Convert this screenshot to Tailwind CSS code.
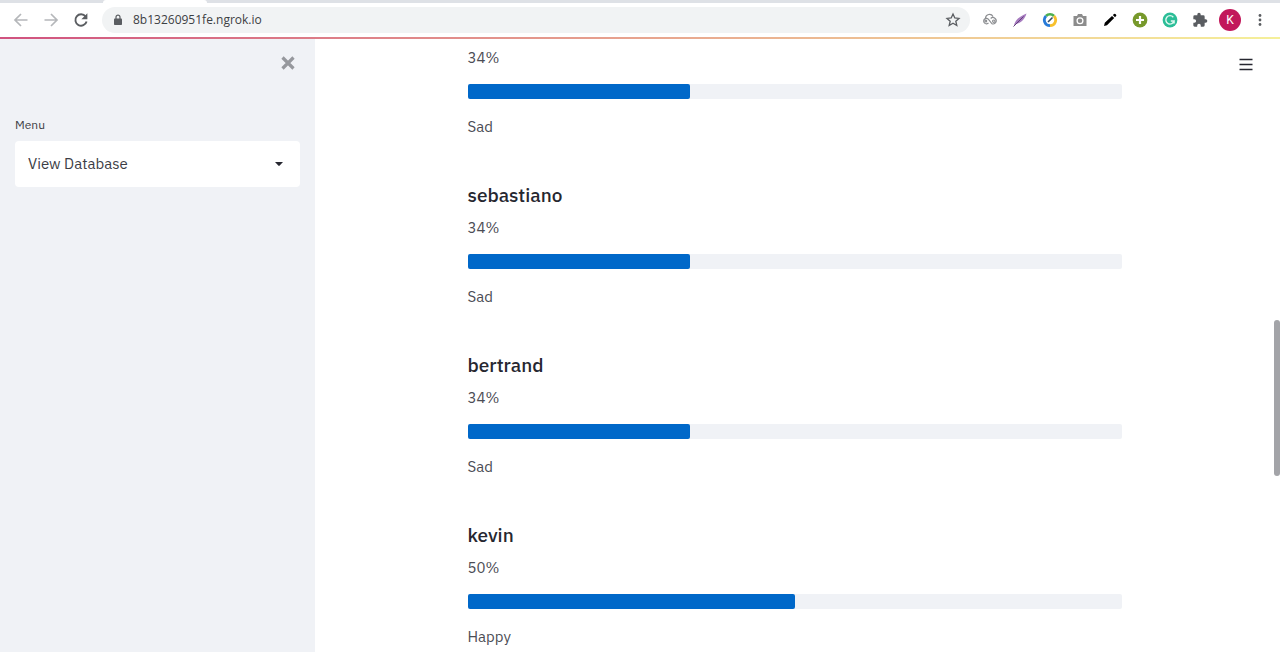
<!DOCTYPE html>
<html lang="en">
<head>
<meta charset="utf-8">
<meta name="viewport" content="width=device-width, initial-scale=1">
<title>View Database</title>
<script src="https://cdn.jsdelivr.net/npm/@tailwindcss/browser@4"></script>
</head>
<body class="flex h-screen flex-col overflow-hidden bg-white font-['IBM_Plex_Sans','Noto_Sans',sans-serif] text-[#262730]">
<header class="shrink-0">
  <div class="h-[3px] bg-[#dee1e6] pl-[103px]"><div class="h-full w-[104px] rounded-t bg-white"></div></div>
  <div class="flex h-[34px] items-center bg-white pr-3 pl-3">
    <nav class="flex gap-3" aria-label="Browser">
      <button class="size-[18px]" aria-label="Back"><svg class="size-[18px]" viewBox="0 0 18 18" fill="none" stroke="#b5b7ba" stroke-width="1.7"><path d="M15.500 9H3M9 3 3 9l6 6"/></svg></button>
      <button class="size-[18px]" aria-label="Forward"><svg class="size-[18px]" viewBox="0 0 18 18" fill="none" stroke="#b5b7ba" stroke-width="1.700"><path d="M2.500 9H15M9 3l6 6-6 6"/></svg></button>
      <button class="size-[18px]" aria-label="Reload"><svg class="size-[18px]" viewBox="0 0 18 18"><path d="M13.600 5.500A5.700 5.700 0 1 0 14.600 10.500" fill="none" stroke="#5a5d61" stroke-width="1.900"/><path d="M15.400 2.200v6H9.400z" fill="#5a5d61"/></svg></button>
    </nav>
    <div class="ml-3 flex h-[26px] flex-1 items-center rounded-full bg-[#f1f3f4] pr-[9px] pl-[11px]">
      <svg class="h-3 w-[10px]" viewBox="0 0 10 12"><rect x="1" y="4.500" width="8" height="6.500" rx=".8" fill="#5a5d61"/><path d="M3 5V3.200a2 2 0 0 1 4 0V5" fill="none" stroke="#5a5d61" stroke-width="1.200"/></svg>
      <input class="ml-[10px] min-w-0 flex-1 bg-transparent font-['Open_Sans',sans-serif] text-[12px] text-[#3c4043] outline-none" aria-label="Address" value="8b13260951fe.ngrok.io">
      <button class="size-4" aria-label="Bookmark"><svg class="size-4" viewBox="0 0 16 16" fill="none" stroke="#5a5d61" stroke-width="1.300"><path d="m8 2 1.800 4 4.200.4-3.200 2.800 1 4.300L8 11.200l-3.800 2.300 1-4.300L2 6.400l4.200-.4z"/></svg></button>
    </div>
    <div class="ml-3 flex items-center gap-[14px]">
      <button class="size-4" aria-label="Cloud extension"><svg class="size-4" viewBox="0 0 16 16" fill="none" stroke="#8c8e91" stroke-width="1.200"><path d="M3.500 6A4 4 0 0 1 11 4.500M6.500 10.800A2.700 2.700 0 1 1 6.300 7.200L10 11.800a3.200 3.200 0 1 0-1.300-5.300"/><circle cx="3.800" cy="9" r=".9"/><circle cx="11.800" cy="9.200" r="1.200"/></svg></button>
      <button class="size-4" aria-label="Feather extension"><svg class="size-4" viewBox="0 0 16 16"><path d="M2 13.500C3 8 8 4 14.500 1.500 13 7 9 11 4 12z" fill="#a67bbf"/><path d="m1.500 14.500 10-10" stroke="#63417a"/></svg></button>
      <button class="size-4" aria-label="Compass extension"><svg class="size-4" viewBox="0 0 16 16" fill="none" stroke-width="2.800"><path d="M4 4A5.700 5.700 0 0 1 12 4" stroke="#4caf50"/><path d="M8 13.700A5.700 5.700 0 0 1 4 4" stroke="#287bd8"/><path d="M12 4a5.700 5.700 0 0 1-4 9.700" stroke="#f7c02c"/><path d="m6 10 4.500-4.500" stroke="#374b62" stroke-width="1.600"/></svg></button>
      <button class="size-4" aria-label="Camera extension"><svg class="size-4" viewBox="0 0 16 16"><path d="M1.500 4H5l1-2h4l1 2h3.500v10h-13z" fill="#8c8c8c"/><circle cx="8" cy="8.700" r="2.900" fill="#8c8c8c" stroke="#fff" stroke-width="1.300"/></svg></button>
      <button class="size-4" aria-label="Pen extension"><svg class="size-4" viewBox="0 0 16 16"><path d="m2 14 .8-3.200L10 3.900l2.200 2.200L5 13.200zM10.800 3.100l1.300-1.200q.7-.5 1.300.1l.7.7q.6.700 0 1.300L13 5.300z" fill="#000"/></svg></button>
      <button class="size-4" aria-label="Add extension"><svg class="size-4" viewBox="0 0 16 16"><circle cx="8" cy="8" r="7.400" fill="#77992b"/><path d="M8 4v8M4 8h8" stroke="#fff" stroke-width="2.200"/></svg></button>
      <button class="size-4" aria-label="Grammar extension"><svg class="size-4" viewBox="0 0 16 16"><circle cx="8" cy="8" r="7.400" fill="#2bbd97"/><path d="M11.300 5.200A4.200 4.200 0 1 0 12.100 9H8.800M12.100 9v2.500" fill="none" stroke="#dff8ef" stroke-width="1.400"/></svg></button>
      <button class="size-4" aria-label="Extensions"><svg class="size-4" viewBox="0 0 24 24"><path fill="#5a5d61" d="M20.500 11H19V7a2 2 0 0 0-2-2h-4V3.500a2.500 2.500 0 0 0-5 0V5H4a2 2 0 0 0-2 2v3.800h1.500a2.700 2.700 0 0 1 0 5.400H2V20c0 1.100.9 2 2 2h3.800v-1.500a2.700 2.700 0 0 1 5.400 0V22H17a2 2 0 0 0 2-2v-4h1.500a2.500 2.500 0 0 0 0-5"/></svg></button>
      <button class="-mx-[3px] flex size-[22px] items-center justify-center rounded-full bg-[#c2185b] font-['Roboto',sans-serif] text-[12px] text-white" aria-label="Profile K">K</button>
      <button class="size-4" aria-label="Browser menu"><svg class="size-4" viewBox="0 0 16 16" fill="#5a5d61"><circle cx="8" cy="3.500" r="1.400"/><circle cx="8" cy="8" r="1.400"/><circle cx="8" cy="12.500" r="1.400"/></svg></button>
    </div>
  </div>
  <div class="h-[2px] bg-linear-to-r from-[#d0527f] to-[#f5f09a]"></div>
</header>
<div class="flex min-h-0 flex-1">
  <aside class="w-[315px] shrink-0 bg-[#f0f2f6] px-[15px] pt-4">
    <div class="flex justify-end pr-[4px]"><button class="size-4" aria-label="Close sidebar"><svg class="size-4" viewBox="0 0 16 16" stroke="#96989d" stroke-width="3.200"><path d="m2.500 2.500 11 11M13.500 2.500l-11 11"/></svg></button></div>
    <label for="menu" class="mt-[45px] block text-[12px] leading-[18px] text-[#3c3d45]">Menu</label>
    <div class="mt-[7px] grid items-center">
      <select id="menu" class="col-start-1 row-start-1 h-[46px] w-full appearance-none rounded bg-white px-[13px] text-[15px] text-[#3c3d45]"><option>View Database</option></select>
      <svg class="pointer-events-none col-start-1 row-start-1 mr-[17px] h-[4px] w-2 justify-self-end" viewBox="0 0 8 4"><path d="M0 0h8L4.700 3.600q-.7.600-1.400 0z" fill="#262730"/></svg>
    </div>
  </aside>
  <main class="flex min-w-0 flex-1">
    <div class="relative min-w-0 flex-1 px-8 pt-[7px]">
      <button class="absolute top-[17px] right-5 size-4" aria-label="App menu"><svg class="size-4" viewBox="0 0 16 16" stroke="#262730" stroke-width="1.700"><path d="M1.500 3.500h13M1.500 8.500h13M1.500 13.500h13"/></svg></button>
      <div class="mx-auto flex max-w-[654px] flex-col gap-[44px] text-[15px] leading-6 text-[#4b4c54]">
        <section>
          <p>34%</p>
          <div class="mt-[14px] h-[15px] rounded-xs bg-[#f0f2f6]" role="progressbar" aria-label="34%" aria-valuenow="34"><div class="h-full rounded-xs bg-[#0068c9]" style="width:34%"></div></div>
          <p class="mt-4">Sad</p>
        </section>
        <section>
          <h3 class="text-[19px] leading-6 font-medium text-[#262730]">sebastiano</h3>
          <p class="mt-[9px]">34%</p>
          <div class="mt-[14px] h-[15px] rounded-xs bg-[#f0f2f6]" role="progressbar" aria-label="sebastiano" aria-valuenow="34"><div class="h-full rounded-xs bg-[#0068c9]" style="width:34%"></div></div>
          <p class="mt-4">Sad</p>
        </section>
        <section>
          <h3 class="text-[19px] leading-6 font-medium text-[#262730]">bertrand</h3>
          <p class="mt-[9px]">34%</p>
          <div class="mt-[14px] h-[15px] rounded-xs bg-[#f0f2f6]" role="progressbar" aria-label="bertrand" aria-valuenow="34"><div class="h-full rounded-xs bg-[#0068c9]" style="width:34%"></div></div>
          <p class="mt-4">Sad</p>
        </section>
        <section>
          <h3 class="text-[19px] leading-6 font-medium text-[#262730]">kevin</h3>
          <p class="mt-[9px]">50%</p>
          <div class="mt-[14px] h-[15px] rounded-xs bg-[#f0f2f6]" role="progressbar" aria-label="kevin" aria-valuenow="50"><div class="h-full rounded-xs bg-[#0068c9]" style="width:50%"></div></div>
          <p class="mt-4">Happy</p>
        </section>
      </div>
    </div>
    <div class="w-[6px] shrink-0 pt-[281px]"><div class="h-[156px] rounded-full bg-[#a3a4a8]"></div></div>
  </main>
</div>
</body>
</html>
